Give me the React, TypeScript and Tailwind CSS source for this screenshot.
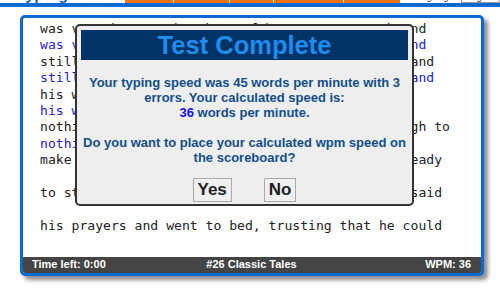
import React from 'react';

type Line = { text: string; typed?: boolean };

const lines: Line[] = [
  { text: 'was very honest, but he could not earn enough and' },
  { text: 'was very honest, but he could not earn enough and', typed: true },
  { text: 'still he could not live on what he had earned, and' },
  { text: 'still he could not live on what he had earned, and', typed: true },
  { text: 'his wife and children were often hungry, and' },
  { text: 'his wife and children were often hungry, and', typed: true },
  { text: 'nothing was left him but the leather, just enough to' },
  { text: 'nothing was left him but the', typed: true },
  { text: 'make one pair of shoes. Then he cut them, all ready' },
  { text: '', typed: true },
  { text: 'to stitch the next day, and when night came he said' },
  { text: '', typed: true },
  { text: 'his prayers and went to bed, trusting that he could' },
];

const App: React.FC = () => {
  return (
    <div className="relative w-[500px] h-[289px] overflow-hidden bg-white font-['Liberation_Sans',Arial,sans-serif]">
      {/* site header, mostly scrolled away */}
      <div className="flex h-[3px] overflow-hidden">
        <div className="w-[128px] pl-[20px]">
          <span className="block -mt-[14px] text-[16px] leading-[18px] font-bold text-[#1a66cc]">typing</span>
        </div>
        <div className="flex w-[282px] gap-px bg-white">
          <div className="w-[48px] bg-[#ee7413]" />
          <div className="w-[55px] bg-[#ee7413]" />
          <div className="w-[43px] bg-[#ee7413]" />
          <div className="w-[69px] bg-[#ee7413]" />
          <div className="flex-1 bg-[#ee7413]" />
        </div>
        <div className="flex flex-1 items-start gap-1 pl-[10px]">
          <span className="block -mt-[9px] text-[10px] leading-[12px] text-[#444]">Language:</span>
          <span className="block -mt-[9px] h-[12px] border border-[#999] px-[2px] text-[10px] leading-[10px] text-[#444]">English</span>
        </div>
      </div>
      <div className="h-[4px] bg-[#0b69d4]" />

      {/* typing box */}
      <div className="mt-[8px] ml-[20px] w-[464px] rounded-[5px] border-[3px] border-[#0b69d4] bg-white shadow-[4px_4px_4px_rgba(0,0,0,0.45)] overflow-hidden">
        <div className="h-[239px] pt-[3px] pl-[17px] font-['DejaVu_Sans_Mono',monospace] text-[13.1px] leading-[16.4px]">
          {lines.map((l, i) => (
            <div
              key={i}
              className={`h-[16.4px] whitespace-pre ${l.typed ? 'text-[#2323c8]' : 'text-[#222]'}`}
            >
              {l.text}
            </div>
          ))}
        </div>
        <div className="flex h-[15.5px] items-center justify-between bg-[#444] pl-[9px] pr-[10px] text-[11px] font-bold leading-[15.5px] text-white">
          <span className="w-[120px]">Time left: 0:00</span>
          <span>#26 Classic Tales</span>
          <span className="w-[120px] text-right">WPM: 36</span>
        </div>
      </div>

      {/* result dialog */}
      <div className="absolute left-[75px] top-[24px] w-[339px] rounded-[5px] border-2 border-[#333] bg-[#eeeeee] p-[4px] pb-[2px]">
        <div className="h-[30px] bg-[#003366] text-center text-[25.5px] font-bold leading-[30px] text-[#1e8cf0]">
          Test Complete
        </div>
        <div className="mt-[15px] text-center text-[13px] font-bold leading-[15px] text-[#104e8b]">
          <p>Your typing speed was 45 words per minute with 3</p>
          <p>errors. Your calculated speed is:</p>
          <p>
            <span className="text-[#1010ee]">36</span> words per minute.
          </p>
          <p className="h-[15px]" />
          <p>Do you want to place your calculated wpm speed on</p>
          <p>the scoreboard?</p>
        </div>
        <div className="mt-[13px] flex justify-center gap-[32px]">
          <button className="h-[24px] border border-[#aaa] bg-[#f0f0f0] px-[4px] text-[17px] font-bold leading-[22px] text-[#222]">
            Yes
          </button>
          <button className="h-[24px] border border-[#aaa] bg-[#f0f0f0] px-[4px] text-[17px] font-bold leading-[22px] text-[#222]">
            No
          </button>
        </div>
      </div>
    </div>
  );
};

export default App;
